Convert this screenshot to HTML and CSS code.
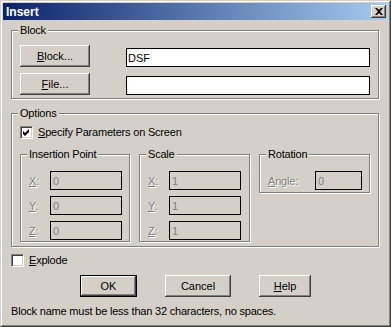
FILE: index.html
```html
<!DOCTYPE html>
<html lang="en">
  <head>
    <meta charset="UTF-8" />
    <title>Insert</title>
    <link rel="stylesheet" href="styles.css">
  </head>

  <body>
    <div class="window">
      <div class="frame">
        <div class="titlebar">
          <span class="title">Insert</span>
          <span class="close">
            <svg width="8" height="7" viewBox="0 0 8 7">
              <path d="M0 0 L2 0 L4 2 L6 0 L8 0 L5 3.5 L8 7 L6 7 L4 5 L2 7 L0 7 L3 3.5 Z" fill="#000" />
            </svg>
          </span>
        </div>

        <div class="content">
          <div class="group block">
            <div class="group-title">Block</div>
            <div class="field-row">
              <button type="button" class="btn wide"><u>B</u>lock...</button>
              <input type="text" class="edit name" value="DSF" />
            </div>
            <div class="field-row second">
              <button type="button" class="btn wide"><u>F</u>ile...</button>
              <input type="text" class="edit name" value="" />
            </div>
          </div>
          <!--Block end-->

          <div class="group options">
            <div class="group-title">Options</div>
            <div class="check-row specify">
              <span class="check">
                <svg width="7" height="7" viewBox="0 0 7 7">
                  <polygon points="0,2 2,4 6,0 6,3 2,7 0,5" fill="#000" />
                </svg>
              </span>
              <span><u>S</u>pecify Parameters on Screen</span>
            </div>

            <div class="subgroups">
              <div class="group sub">
                <div class="group-title">Insertion Point</div>
                <div class="coord first">
                  <span class="dim"><u>X</u>:</span>
                  <input type="text" class="edit value" value="0" disabled />
                </div>
                <div class="coord">
                  <span class="dim"><u>Y</u>:</span>
                  <input type="text" class="edit value" value="0" disabled />
                </div>
                <div class="coord">
                  <span class="dim"><u>Z</u>:</span>
                  <input type="text" class="edit value" value="0" disabled />
                </div>
              </div>

              <div class="group sub">
                <div class="group-title">Scale</div>
                <div class="coord first">
                  <span class="dim"><u>X</u>:</span>
                  <input type="text" class="edit value" value="1" disabled />
                </div>
                <div class="coord">
                  <span class="dim"><u>Y</u>:</span>
                  <input type="text" class="edit value" value="1" disabled />
                </div>
                <div class="coord">
                  <span class="dim"><u>Z</u>:</span>
                  <input type="text" class="edit value" value="1" disabled />
                </div>
              </div>

              <div class="group sub rotation">
                <div class="group-title">Rotation</div>
                <div class="coord first">
                  <span class="dim"><u>A</u>ngle:</span>
                  <input type="text" class="edit value" value="0" disabled />
                </div>
              </div>
            </div>
          </div>
          <!--Options end-->

          <div class="check-row explode">
            <span class="check"></span>
            <span><u>E</u>xplode</span>
          </div>

          <div class="buttons">
            <button type="button" class="btn ok">OK</button>
            <button type="button" class="btn cancel">Cancel</button>
            <button type="button" class="btn help"><u>H</u>elp</button>
          </div>

          <p class="status">Block name must be less than 32 characters, no spaces.</p>
        </div>
      </div>
    </div>
  </body>
</html>
```

FILE: styles.css
```css
html,
body {
  margin: 0;
  padding: 0;
  background: #d4d0c8;
  font-family: "Liberation Sans", Arial, sans-serif;
  font-size: 11px;
  letter-spacing: -0.2px;
  color: #000;
}

.window {
  width: 391px;
  height: 327px;
  box-sizing: border-box;
  border: 1px solid;
  border-color: #d4d0c8 #404040 #404040 #d4d0c8;
  background: #d4d0c8;
}

.frame {
  height: 100%;
  box-sizing: border-box;
  border: 1px solid;
  border-color: #fff #808080 #808080 #fff;
  padding: 1px 2px 2px 1px;
}

.titlebar {
  height: 17px;
  display: flex;
  align-items: center;
  justify-content: space-between;
  padding-left: 3px;
  background: linear-gradient(to right, #0a246a, #a6caf0);
}

.title {
  color: #fff;
  font-size: 12px;
  font-weight: bold;
  letter-spacing: 0;
}

.close {
  width: 15px;
  height: 13px;
  margin-right: 1px;
  display: flex;
  align-items: center;
  justify-content: center;
  background: #d4d0c8;
  box-shadow: inset -1px -1px #404040, inset 1px 1px #fff, inset -2px -2px #808080;
}

.content {
  padding: 0 8px;
}

/* etched group boxes */
.group {
  display: flex;
  flex-direction: column;
  border: 1px solid #808080;
  box-shadow: inset 1px 1px #fff, 1px 1px #fff;
  padding: 0 8px;
}

.group-title {
  align-self: flex-start;
  margin: -7px 0 0 -2px;
  padding: 0 2px;
  line-height: 13px;
  background: #d4d0c8;
}

.block {
  margin-top: 10px;
  padding-bottom: 3px;
}

.field-row {
  display: flex;
  align-items: flex-start;
  margin-top: 8px;
}

.field-row.second {
  margin-top: 6px;
}

.btn {
  height: 22px;
  padding: 0;
  border: 0;
  font: inherit;
  color: #000;
  background: #d4d0c8;
  box-shadow: inset -1px -1px #404040, inset 1px 1px #fff, inset -2px -2px #808080;
}

.wide {
  width: 70px;
}

.edit {
  box-sizing: border-box;
  height: 19px;
  margin: 0;
  border: 1px solid #000;
  padding: 0 1px;
  font: inherit;
  color: #000;
  background: #fff;
  outline: none;
}

.name {
  flex: 1;
  min-width: 0;
  margin: 3px 0 0 36px;
}

.options {
  margin-top: 14px;
  padding-bottom: 4px;
}

.check-row {
  display: flex;
  align-items: center;
  gap: 5px;
  line-height: 13px;
}

.specify {
  margin-top: 6px;
}

.check {
  width: 13px;
  height: 13px;
  box-sizing: border-box;
  display: flex;
  align-items: center;
  justify-content: center;
  border: 1px solid;
  border-color: #808080 #fff #fff #808080;
  box-shadow: inset 1px 1px #404040, inset -1px -1px #d4d0c8;
  background: #fff;
}

.subgroups {
  display: grid;
  grid-template-columns: 110px 111px 111px;
  column-gap: 9px;
  align-items: start;
  margin-top: 15px;
}

.sub {
  padding: 0 7px 1px 8px;
}

.coord {
  display: flex;
  align-items: center;
  margin-top: 6px;
}

.coord.first {
  margin-top: 10px;
}

.dim {
  width: 21px;
  color: #808080;
  text-shadow: 1px 1px #fff;
}

.value {
  width: 72px;
  padding-left: 2px;
  color: #808080;
  background: #d4d0c8;
}

.rotation {
  padding-bottom: 2px;
}

.rotation .dim {
  width: 47px;
}

.rotation .value {
  width: 47px;
}

.explode {
  margin-top: 7px;
}

.buttons {
  display: flex;
  gap: 28px;
  padding-left: 69px;
  margin-top: 8px;
}

.ok {
  width: 57px;
  border: 1px solid #000;
}

.cancel {
  width: 66px;
}

.help {
  width: 52px;
}

.status {
  margin: 8px 0 0;
  line-height: 13px;
}
```
